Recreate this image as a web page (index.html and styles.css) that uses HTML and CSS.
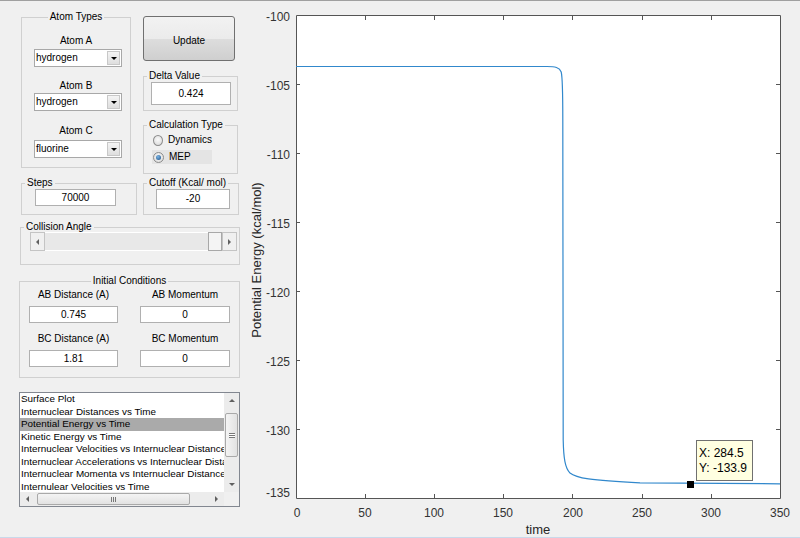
FILE: index.html
```html
<!DOCTYPE html>
<html lang="en">
<head>
    <meta charset="UTF-8">
    <title>Reaction Dynamics</title>
    <link rel="stylesheet" href="styles.css">
</head>
<body>
<div class="window">
    <!-- Controls column -->
    <div class="controls">
        <div class="row-top">
            <fieldset class="group atoms">
                <legend class="mid">Atom Types</legend>
                <div class="lbl lbl-a">Atom A</div>
                <div class="combo combo-a"><span>hydrogen</span><i class="combo-btn"></i></div>
                <div class="lbl lbl-b">Atom B</div>
                <div class="combo combo-b"><span>hydrogen</span><i class="combo-btn"></i></div>
                <div class="lbl lbl-c">Atom C</div>
                <div class="combo combo-c"><span>fluorine</span><i class="combo-btn"></i></div>
            </fieldset>
            <div class="side">
                <button class="btn-update">Update</button>
                <fieldset class="group delta">
                    <legend>Delta Value</legend>
                    <div class="edit edit-delta">0.424</div>
                </fieldset>
                <fieldset class="group calc">
                    <legend>Calculation Type</legend>
                    <div class="radio"><span class="dot"></span>Dynamics</div>
                    <div class="radio on"><span class="dot"></span>MEP</div>
                </fieldset>
            </div>
        </div>

        <div class="row-mid">
            <fieldset class="group steps">
                <legend>Steps</legend>
                <div class="edit edit-steps">70000</div>
            </fieldset>
            <fieldset class="group cutoff">
                <legend>Cutoff (Kcal/ mol)</legend>
                <div class="edit edit-cutoff">-20</div>
            </fieldset>
        </div>

        <fieldset class="group collision">
            <legend>Collision Angle</legend>
            <div class="slider">
                <span class="sl-arrow sl-left"></span>
                <span class="sl-track"></span>
                <span class="sl-thumb"></span>
                <span class="sl-arrow sl-right"></span>
            </div>
        </fieldset>

        <fieldset class="group initial">
            <legend class="mid">Initial Conditions</legend>
            <div class="ic-grid">
                <div class="ic-lbl">AB Distance (A)</div>
                <div class="ic-lbl">AB Momentum</div>
                <div class="edit ic-edit r2">0.745</div>
                <div class="edit ic-edit r2">0</div>
                <div class="ic-lbl r3">BC Distance (A)</div>
                <div class="ic-lbl r3">BC Momentum</div>
                <div class="edit ic-edit r4">1.81</div>
                <div class="edit ic-edit r4">0</div>
            </div>
        </fieldset>

        <div class="listbox">
            <div class="lb-main">
                <ul class="lb-items">
                    <li>Surface Plot</li>
                    <li>Internuclear Distances vs Time</li>
                    <li class="sel">Potential Energy vs Time</li>
                    <li>Kinetic Energy vs Time</li>
                    <li>Internuclear Velocities vs Internuclear Distance</li>
                    <li>Internuclear Accelerations vs Internuclear Distance</li>
                    <li>Internuclear Momenta vs Internuclear Distance</li>
                    <li>Internulear Velocities vs Time</li>
                </ul>
                <div class="vscroll">
                    <span class="sb-btn"><i class="tri-up"></i></span>
                    <span class="vthumb"><i class="grip-h"></i></span>
                    <span class="sb-fill"></span>
                    <span class="sb-btn"><i class="tri-down"></i></span>
                </div>
            </div>
            <div class="hscroll">
                <span class="sb-btn"><i class="tri-left"></i></span>
                <span class="hthumb"><i class="grip-v"></i></span>
                <span class="sb-fill"></span>
                <span class="sb-btn"><i class="tri-right"></i></span>
                <span class="sb-corner"></span>
            </div>
        </div>
    </div>

    <!-- Plot -->
    <div class="plot">
        <svg width="550" height="536" viewBox="250 1 550 536" xmlns="http://www.w3.org/2000/svg">
            <rect x="296" y="15" width="485" height="484" fill="#fff"/>
            <g stroke="#555" stroke-width="1" fill="none">
                <path d="M296.5 15.5H780.5V498.5H296.5Z"/>
                <!-- y ticks -->
                <path d="M296 84.5h4M296 153.5h4M296 222.5h4M296 291.5h4M296 360.5h4M296 429.5h4"/>
                <path d="M780 84.5h-4M780 153.5h-4M780 222.5h-4M780 291.5h-4M780 360.5h-4M780 429.5h-4"/>
                <!-- x ticks -->
                <path d="M365.5 498v-4M434.5 498v-4M503.5 498v-4M572.5 498v-4M642.5 498v-4M711.5 498v-4"/>
                <path d="M365.5 16v4M434.5 16v4M503.5 16v4M572.5 16v4M642.5 16v4M711.5 16v4"/>
            </g>
            <g class="tick-lbl" text-anchor="end">
                <text x="290" y="21">-100</text>
                <text x="290" y="90">-105</text>
                <text x="290" y="159">-110</text>
                <text x="290" y="228">-115</text>
                <text x="290" y="297">-120</text>
                <text x="290" y="366">-125</text>
                <text x="290" y="435">-130</text>
                <text x="290" y="497">-135</text>
            </g>
            <g class="tick-lbl" text-anchor="middle">
                <text x="297" y="517">0</text>
                <text x="365" y="517">50</text>
                <text x="434" y="517">100</text>
                <text x="503" y="517">150</text>
                <text x="573" y="517">200</text>
                <text x="642" y="517">250</text>
                <text x="711" y="517">300</text>
                <text x="780" y="517">350</text>
            </g>
            <text class="axis-lbl" x="538" y="534" text-anchor="middle">time</text>
            <text class="axis-lbl" transform="translate(261 260) rotate(-90)" text-anchor="middle">Potential Energy (kcal/mol)</text>

            <path d="M296 66.5H547C555 66.5 559.5 67.2 561.2 72C562.5 77 562.8 90 562.8 120L563.2 440C563.6 458 565 468 570 473C576 478 590 480.5 640 482.8L780 483.8" fill="none" stroke="#3188cc" stroke-width="1.2"/>

            <rect x="687" y="481" width="7" height="7" fill="#000"/>
            <rect x="696.5" y="440.5" width="56" height="40" fill="#ffffe1" stroke="#707070"/>
            <text class="tip" x="699" y="457">X: 284.5</text>
            <text class="tip" x="699" y="472">Y: -133.9</text>
        </svg>
    </div>
</div>
</body>
</html>
```

FILE: styles.css
```css
* {
    box-sizing: border-box;
}

body {
    margin: 0;
    background: #f0f0f0;
    font-family: "Liberation Sans", Arial, sans-serif;
    font-size: 10px;
    color: #000;
}

.window {
    display: flex;
    width: 800px;
    height: 538px;
    overflow: hidden;
    border-top: 1px solid #a0a0a0;
    border-bottom: 1px solid #c9d9ea;
}

/* Left controls */
.controls {
    width: 250px;
    flex: none;
    padding-top: 10px;
}

.group {
    margin: 0;
    padding: 0;
    min-width: 0;
    border: 1px solid #d0d0d0;
}

.group legend {
    padding: 0 2px;
    margin-left: 3px;
    line-height: 12px;
    font-size: 10px;
}

.group legend.mid {
    margin: 0 auto;
}

.row-top {
    display: flex;
    margin-left: 21px;
}

.atoms {
    width: 110px;
    height: 157px;
    text-align: center;
}

.lbl {
    line-height: 12px;
}

.lbl-a { margin-top: 12px; }
.lbl-b { margin-top: 13px; }
.lbl-c { margin-top: 14px; }

.combo {
    display: flex;
    width: 88px;
    height: 18px;
    margin-left: 12px;
    border: 1px solid #a8a8a8;
    background: #fff;
    text-align: left;
    line-height: 16px;
    padding-left: 1px;
}

.combo-a { margin-top: 2px; }
.combo-b { margin-top: 1px; }
.combo-c { margin-top: 3px; }

.combo span {
    flex: 1;
}

.combo-btn {
    display: flex;
    align-items: center;
    justify-content: center;
    width: 13px;
    margin: 1px;
    background: linear-gradient(#f4f4f4, #dedede);
    border: 1px solid #c8c8c8;
}

.combo-btn::after {
    content: "";
    border-left: 3px solid transparent;
    border-right: 3px solid transparent;
    border-top: 3px solid #000;
}

.side {
    width: 96px;
    margin-left: 12px;
}

.btn-update {
    display: block;
    width: 92px;
    height: 45px;
    margin-top: 5px;
    padding: 3px 0 0;
    border: 1px solid #707070;
    border-radius: 3px;
    background: linear-gradient(#f2f2f2 0%, #ebebeb 50%, #dddddd 51%, #cfcfcf 100%);
    font-family: inherit;
    font-size: 10px;
    color: #000;
}

.delta {
    width: 95px;
    height: 41px;
    margin-top: 9px;
}

.calc {
    width: 95px;
    height: 55px;
    margin-top: 8px;
}

.edit {
    background: #fff;
    border: 1px solid #b0b0b0;
    text-align: center;
}

.edit-delta {
    width: 80px;
    height: 23px;
    margin-left: 7px;
    line-height: 21px;
}

.radio {
    display: flex;
    align-items: center;
    width: 60px;
    height: 14px;
    margin-left: 8px;
    line-height: 14px;
}

.radio:first-of-type {
    margin-top: 2px;
}

.radio + .radio {
    margin-top: 3px;
}

.radio.on {
    background: #e4e4e4;
}

.dot {
    width: 11px;
    height: 11px;
    margin: 0 5px 0 1px;
    border: 1px solid #8c8c8c;
    border-radius: 50%;
    background: radial-gradient(circle at 50% 40%, #fafafa, #d6d6d6);
    display: flex;
    align-items: center;
    justify-content: center;
}

.radio.on .dot::after {
    content: "";
    width: 5px;
    height: 5px;
    border-radius: 50%;
    background: radial-gradient(circle at 40% 35%, #7ab4e4, #1c4f86);
}

.row-mid {
    display: flex;
    margin: 3px 0 0 21px;
}

.steps {
    width: 116px;
    height: 38px;
}

.edit-steps {
    width: 81px;
    height: 17px;
    margin-left: 13px;
    line-height: 15px;
}

.cutoff {
    width: 96px;
    height: 38px;
    margin-left: 6px;
}

.edit-cutoff {
    width: 74px;
    height: 20px;
    margin-left: 12px;
    line-height: 18px;
}

.collision {
    width: 220px;
    height: 44px;
    margin: 6px 0 0 20px;
}

.slider {
    display: flex;
    width: 207px;
    height: 19px;
    margin: -1px 0 0 9px;
    background: #e8e8e8;
}

.sl-arrow {
    width: 15px;
    display: flex;
    align-items: center;
    justify-content: center;
    background: #f0f0f0;
    border: 1px solid #c4c4c4;
}

.sl-left::after {
    content: "";
    border-top: 3px solid transparent;
    border-bottom: 3px solid transparent;
    border-right: 3px solid #606060;
}

.sl-right::after {
    content: "";
    border-top: 3px solid transparent;
    border-bottom: 3px solid transparent;
    border-left: 3px solid #606060;
}

.sl-track {
    flex: 1;
    border-top: 1px solid #fff;
    border-bottom: 1px solid #fff;
}

.sl-thumb {
    width: 14px;
    background: #f4f4f4;
    border: 1px solid #a8a8a8;
}

.initial {
    width: 221px;
    height: 103px;
    margin: 10px 0 0 19px;
}

.ic-grid {
    display: grid;
    grid-template-columns: 89px 90px;
    column-gap: 22px;
    margin-left: 9px;
    padding-top: 2px;
    text-align: center;
}

.ic-lbl {
    line-height: 12px;
}

.ic-edit {
    height: 17px;
    line-height: 15px;
}

.r2 { margin-top: 5px; }
.r3 { margin-top: 10px; }
.r4 { margin-top: 5px; }

/* Plot list */
.listbox {
    display: flex;
    flex-direction: column;
    width: 221px;
    height: 115px;
    margin: 14px 0 0 19px;
    border: 1px solid #828790;
    background: #fff;
}

.lb-main {
    display: flex;
    height: 99px;
}

.lb-items {
    flex: 1;
    margin: 0;
    padding: 0;
    list-style: none;
    overflow: hidden;
    white-space: nowrap;
}

.lb-items li {
    height: 12.5px;
    line-height: 12.5px;
    padding-left: 1px;
    overflow: hidden;
    font-size: 9.9px;
}

.lb-items li.sel {
    background: #aaaaaa;
}

.vscroll {
    display: flex;
    flex-direction: column;
    width: 15px;
    background: #ececec;
}

.sb-btn {
    flex: none;
    width: 15px;
    height: 15px;
    display: flex;
    align-items: center;
    justify-content: center;
}

.sb-fill {
    flex: 1;
}

.vthumb {
    height: 44px;
    margin: 5px 1px 0;
    border: 1px solid #a9a9a9;
    border-radius: 2px;
    background: linear-gradient(90deg, #f4f4f4, #e2e2e2);
    display: flex;
    align-items: center;
    justify-content: center;
}

.grip-h {
    width: 6px;
    height: 5px;
    border-top: 1px solid #777;
    border-bottom: 1px solid #777;
    background: linear-gradient(#fff 40%, #777 40%, #777 60%, #fff 60%);
}

.tri-up, .tri-down, .tri-left, .tri-right {
    width: 0;
    height: 0;
}

.tri-up {
    border-left: 3px solid transparent;
    border-right: 3px solid transparent;
    border-bottom: 3px solid #606060;
}

.tri-down {
    border-left: 3px solid transparent;
    border-right: 3px solid transparent;
    border-top: 3px solid #606060;
}

.tri-left {
    border-top: 3px solid transparent;
    border-bottom: 3px solid transparent;
    border-right: 3px solid #606060;
}

.tri-right {
    border-top: 3px solid transparent;
    border-bottom: 3px solid transparent;
    border-left: 3px solid #606060;
}

.hscroll {
    display: flex;
    height: 14px;
    background: #ececec;
}

.hscroll .sb-btn {
    height: 14px;
}

.hthumb {
    width: 153px;
    margin: 1px 0 1px 2px;
    border: 1px solid #a9a9a9;
    border-radius: 2px;
    background: linear-gradient(#f4f4f4, #e2e2e2);
    display: flex;
    align-items: center;
    justify-content: center;
}

.grip-v {
    width: 5px;
    height: 5px;
    background: linear-gradient(90deg, #777 1px, transparent 1px, transparent 2px, #777 2px, #777 3px, transparent 3px, transparent 4px, #777 4px);
}

.sb-corner {
    width: 15px;
    background: #f0f0f0;
}

/* Plot area */
.plot {
    flex: none;
    width: 550px;
}

.plot svg {
    display: block;
}

.tick-lbl text {
    font-family: "Liberation Sans", Arial, sans-serif;
    font-size: 12px;
    fill: #333;
}

.axis-lbl {
    font-family: "Liberation Sans", Arial, sans-serif;
    font-size: 13px;
    fill: #262626;
}

.tip {
    font-family: "Liberation Sans", Arial, sans-serif;
    font-size: 12px;
    fill: #000;
}
```
